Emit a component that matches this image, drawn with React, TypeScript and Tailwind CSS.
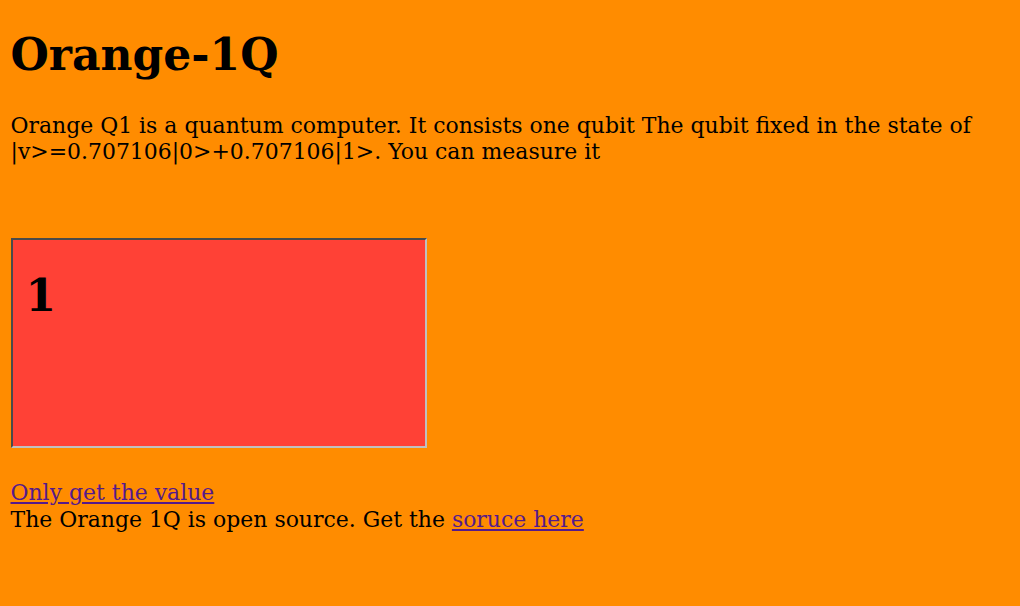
import React from 'react';

const App: React.FC = () => {
  return (
    <div className="min-h-[606px] bg-[#ff8c00] px-[10.5px] pt-[29px] text-black font-['DejaVu_Serif',serif]">
      <h1 className="text-[44px] font-bold leading-[51px] mb-[33px]">Orange-1Q</h1>
      <p className="text-[21.95px] leading-[26px] pr-[30px]">
        Orange Q1 is a quantum computer. It consists one qubit The qubit fixed in the state of |v&gt;=0.707106|0&gt;+0.707106|1&gt;. You can measure it
      </p>

      <div className="mt-[73px] w-[416px] h-[210px] bg-[#ff4136] border-2 border-t-[#4a4a4a] border-l-[#4a4a4a] border-r-[#c0c0c0] border-b-[#c0c0c0]">
        <div className="px-[13px] pt-[29px] text-[44px] font-bold leading-[54px]">1</div>
      </div>

      <div className="mt-[31px] text-[21.95px] leading-[27px]">
        <a href="#" className="text-[#551a8b] underline">Only get the value</a>
        <br />
        The Orange 1Q is open source. Get the{' '}
        <a href="#" className="text-[#551a8b] underline">soruce here</a>
      </div>
    </div>
  );
};

export default App;
